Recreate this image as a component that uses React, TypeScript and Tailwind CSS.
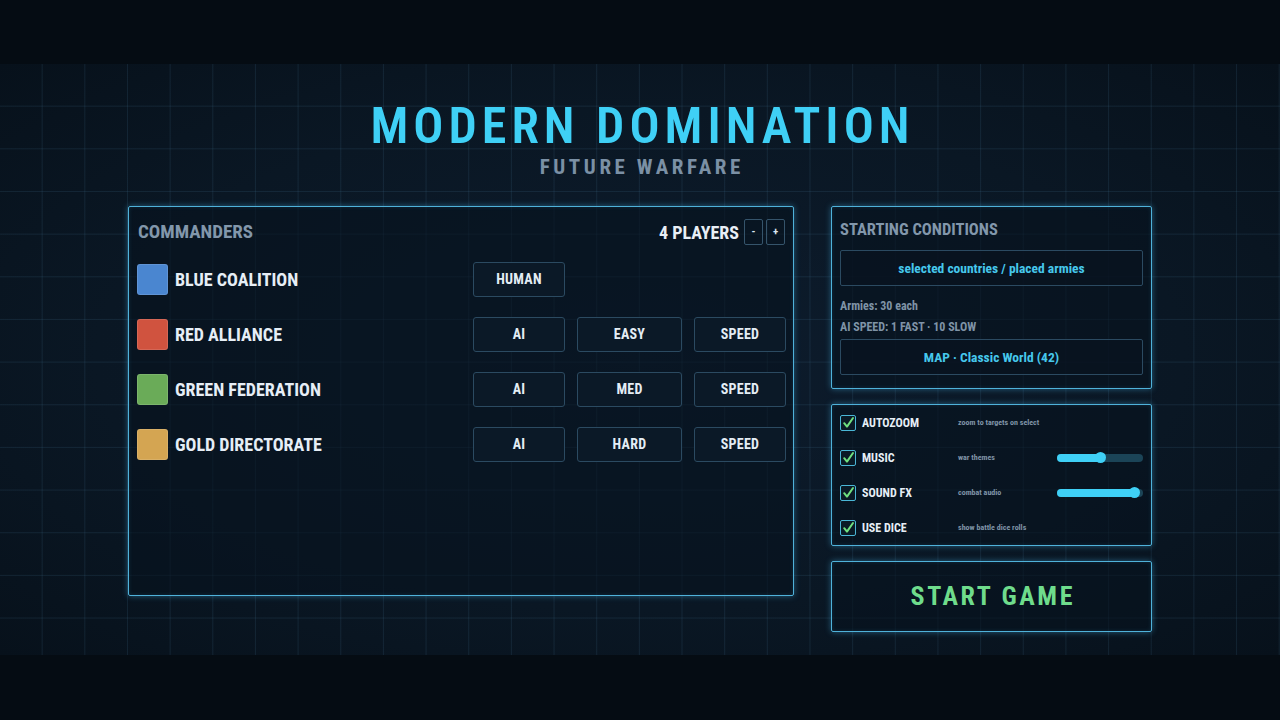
import React from "react";

const FONT = "font-['Roboto_Condensed',Roboto,sans-serif] [font-stretch:75%]";

type Player = {
  name: string;
  swatch: string;
  kind: "HUMAN" | "AI";
  level?: string;
};

const PLAYERS: Player[] = [
  { name: "BLUE COALITION", swatch: "bg-[#4a86d0]", kind: "HUMAN" },
  { name: "RED ALLIANCE", swatch: "bg-[#d0533f]", kind: "AI", level: "EASY" },
  { name: "GREEN FEDERATION", swatch: "bg-[#6aab58]", kind: "AI", level: "MED" },
  { name: "GOLD DIRECTORATE", swatch: "bg-[#d4a552]", kind: "AI", level: "HARD" },
];

function Chip({ label, width }: { label: string; width: string }) {
  return (
    <div
      className={`${width} shrink-0 h-[35px] flex items-center justify-center rounded-[3px] border border-[#2b4a61] bg-[#0b1927] text-[14px] font-bold text-[#e4edf5] tracking-[0.02em]`}
    >
      {label}
    </div>
  );
}

function Panel({ className, children }: { className?: string; children: React.ReactNode }) {
  return (
    <div
      className={`rounded-[2px] border border-[#4fb2da] bg-[#07121e]/60 shadow-[0_0_6px_rgba(70,180,230,0.45),inset_0_0_4px_rgba(70,180,230,0.15)] ${className ?? ""}`}
    >
      {children}
    </div>
  );
}

function Check() {
  return (
    <div className="w-[16px] h-[16px] shrink-0 rounded-[2px] border-[1.5px] border-[#4ab6d6] bg-[#0a1a26] flex items-center justify-center">
      <svg width="13" height="13" viewBox="0 0 13 13" fill="none">
        <path d="M2.2 7.2 L5 10.6 L11 2" stroke="#6fe07f" strokeWidth="2" strokeLinecap="round" strokeLinejoin="round" />
      </svg>
    </div>
  );
}

function Slider({ value }: { value: number }) {
  return (
    <div className="relative w-[86px] h-[8px] rounded-full bg-[#1b4457]">
      <div className="absolute left-0 top-0 h-full rounded-full bg-[#3fd0f6]" style={{ width: `${value}%` }} />
      <div
        className="absolute top-1/2 w-[11px] h-[11px] -mt-[5.5px] -ml-[5.5px] rounded-full bg-[#3fd0f6]"
        style={{ left: `${value}%` }}
      />
    </div>
  );
}

const OPTIONS = [
  { label: "AUTOZOOM", desc: "zoom to targets on select", slider: null as number | null },
  { label: "MUSIC", desc: "war themes", slider: 51 },
  { label: "SOUND FX", desc: "combat audio", slider: 90 },
  { label: "USE DICE", desc: "show battle dice rolls", slider: null },
];

export default function App() {
  return (
    <div className={`w-[1280px] h-[720px] bg-[#050c13] flex flex-col overflow-hidden ${FONT}`}>
      <div className="h-[64px] shrink-0" />
      <div className="relative h-[591px] shrink-0 bg-[radial-gradient(ellipse_at_center,#0d1c2d_0%,#0a1724_60%,#07111b_100%)]">
        {/* faint blueprint grid */}
        <div className="absolute inset-0 bg-[linear-gradient(to_bottom,transparent_calc(100%-1px),rgba(90,150,190,0.13)_calc(100%-1px)),linear-gradient(to_right,transparent_calc(100%-1px),rgba(90,150,190,0.13)_calc(100%-1px))] bg-[size:42.667px_42.667px]" />

        <div className="relative flex flex-col items-center pt-[37px]">
          <h1 className="text-[50px] leading-[50px] font-semibold tracking-[0.1em] pl-[0.1em] text-[#3fd0f6]">
            MODERN DOMINATION
          </h1>
          <div className="mt-[4px] text-[21px] leading-[24px] font-bold tracking-[0.17em] pl-[0.17em] text-[#7b90a5]">
            FUTURE WARFARE
          </div>

          <div className="mt-[27px] w-[1024px] flex gap-[37px] items-start">
            {/* commanders */}
            <Panel className="w-[666px] h-[390px] px-[8px] pt-[7px]">
              <div className="h-[36px] flex items-center justify-between">
                <div className="pl-[1px] text-[19px] font-bold text-[#8297ab]">COMMANDERS</div>
                <div className="flex items-center">
                  <span className="text-[18px] font-bold text-[#e8eff6] mr-[5px]">4 PLAYERS</span>
                  <div className="w-[19px] h-[26px] rounded-[2px] border border-[#35546b] flex items-center justify-center text-[11px] font-bold text-[#dce6ef]">
                    -
                  </div>
                  <div className="ml-[3px] w-[19px] h-[26px] rounded-[2px] border border-[#35546b] flex items-center justify-center text-[11px] font-bold text-[#dce6ef]">
                    +
                  </div>
                </div>
              </div>
              <div className="mt-[12px] flex flex-col gap-[20px]">
                {PLAYERS.map((p) => (
                  <div key={p.name} className="h-[35px] flex items-center">
                    <div className={`w-[31px] h-[31px] shrink-0 rounded-[3px] ${p.swatch} shadow-[inset_0_0_0_1px_rgba(255,255,255,0.12)]`} />
                    <div className="ml-[7px] w-[298px] shrink-0 text-[18px] font-bold text-[#e6eef6]">{p.name}</div>
                    <Chip label={p.kind} width="w-[92px]" />
                    {p.level && (
                      <>
                        <div className="ml-[12px] shrink-0">
                          <Chip label={p.level} width="w-[105px]" />
                        </div>
                        <div className="ml-[12px] shrink-0">
                          <Chip label="SPEED" width="w-[92px]" />
                        </div>
                      </>
                    )}
                  </div>
                ))}
              </div>
            </Panel>

            <div className="w-[321px] flex flex-col gap-[15px]">
              {/* starting conditions */}
              <Panel className="h-[183px] px-[8px] pt-[11px]">
                <div className="h-[24px] flex items-center text-[16.5px] font-bold text-[#8297ab]">STARTING CONDITIONS</div>
                <div className="mt-[8px] h-[36px] rounded-[2px] border border-[#2b4a61] bg-[#08131f]/70 flex items-center justify-center text-[13.5px] font-bold text-[#46c8ec]">
                  selected countries / placed armies
                </div>
                <div className="mt-[9px] h-[21px] flex items-center text-[12px] font-bold text-[#7f93a6]">Armies: 30 each</div>
                <div className="h-[21px] flex items-center text-[12px] font-bold text-[#7f93a6]">AI SPEED: 1 FAST · 10 SLOW</div>
                <div className="mt-[2px] h-[36px] rounded-[2px] border border-[#2b4a61] bg-[#08131f]/70 flex items-center justify-center text-[13.5px] font-bold text-[#46c8ec]">
                  MAP · Classic World (42)
                </div>
              </Panel>

              {/* toggles */}
              <Panel className="h-[142px] px-[8px]">
                {OPTIONS.map((o) => (
                  <div key={o.label} className="h-[35px] flex items-center">
                    <Check />
                    <div className="ml-[6px] w-[96px] text-[12px] font-bold text-[#e6eef6]">{o.label}</div>
                    <div className="w-[99px] text-[8px] font-bold text-[#7f93a6] whitespace-nowrap">{o.desc}</div>
                    {o.slider !== null && <Slider value={o.slider} />}
                  </div>
                ))}
              </Panel>

              {/* start */}
              <Panel className="h-[71px] flex items-center justify-center">
                <span className="text-[26px] font-bold tracking-[0.1em] pl-[0.1em] text-[#6fdc8c]">START GAME</span>
              </Panel>
            </div>
          </div>
        </div>
      </div>
      <div className="flex-1" />
    </div>
  );
}
